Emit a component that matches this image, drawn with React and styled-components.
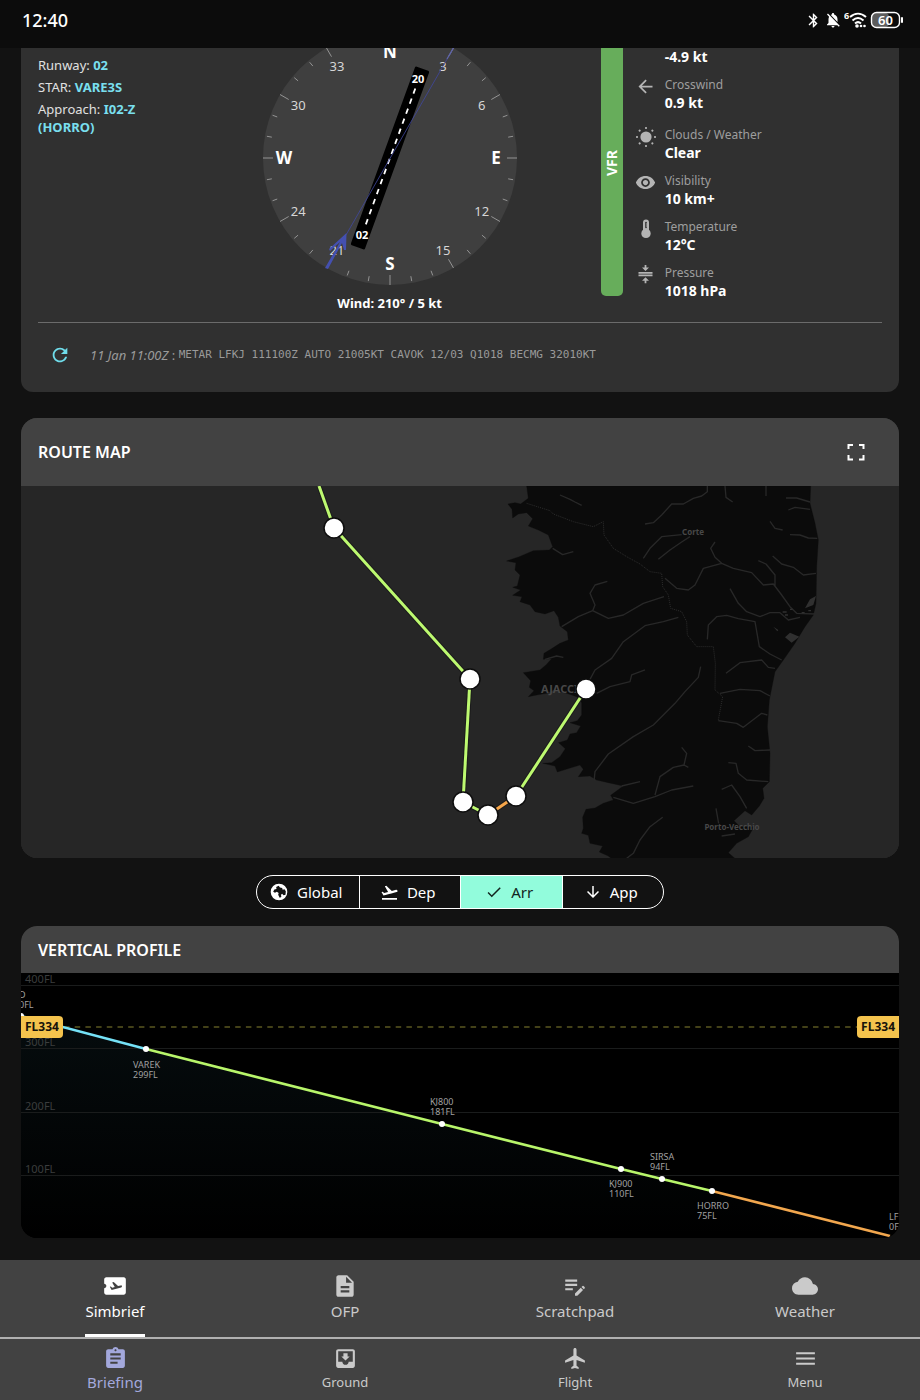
import styled, { createGlobalStyle } from "styled-components";
import {
  MdAirplaneTicket,
  MdArrowBack,
  MdArrowDownward,
  MdAssignment,
  MdBluetooth,
  MdCheck,
  MdCloud,
  MdCompress,
  MdDescription,
  MdEditNote,
  MdFlight,
  MdFlightTakeoff,
  MdMenu,
  MdMoveToInbox,
  MdNotificationsOff,
  MdRefresh,
  MdVisibility,
} from "react-icons/md";

const GlobalStyle = createGlobalStyle`
  * {
    box-sizing: border-box;
  }
  body {
    margin: 0;
    background: #121212;
    color: #fff;
    font-family: "Noto Sans", "Open Sans", sans-serif;
    font-size: 13px;
    line-height: 18px;
  }
  svg {
    display: block;
  }
`;

const Screen = styled.div`
  display: flex;
  flex-direction: column;
  min-height: 100vh;
`;

/* ---------- status bar ---------- */

const StatusBar = styled.header`
  display: flex;
  align-items: center;
  justify-content: space-between;
  height: 48px;
  padding: 0 16px 8px 22px;
  background: #0c0c0c;
`;
const Clock = styled.time`
  font-size: 18px;
  font-weight: 500;
`;
const StatusIcons = styled.div`
  display: flex;
  align-items: center;
  gap: 2px;
`;

/* ---------- cards ---------- */

const Content = styled.main`
  flex: 1;
  display: flex;
  flex-direction: column;
  padding: 0 21px 22px;
`;
const Card = styled.section`
  margin-bottom: ${(p) => (p.$scrolled ? 26 : 0)}px;
  background: ${(p) => p.$bg || "#303030"};
  border-radius: ${(p) => (p.$scrolled ? "0 0 12px 12px" : "16px")};
  overflow: hidden;
`;
const CardHeader = styled.div`
  display: flex;
  align-items: center;
  justify-content: space-between;
  height: ${(p) => (p.$tall ? 68 : 47)}px;
  padding: 0 30px 0 17px;
  background: #424242;
`;
const CardTitle = styled.h2`
  margin: 0;
  font-size: 16px;
  font-weight: 600;
`;
const IconButton = styled.button`
  display: flex;
  padding: 0;
  border: 0;
  background: none;
  color: ${(p) => p.$color || "#fff"};
  cursor: pointer;
`;

/* ---------- airport ---------- */

const Airport = styled.div`
  display: grid;
  grid-template-columns: 1fr 3fr 2fr;
  margin: 0 17px;
  padding-bottom: 22px;
  border-bottom: 1px solid #6b6b6b;
`;
const Procedures = styled.div`
  display: flex;
  flex-direction: column;
  gap: 4px;
  padding: 8px 32px 0 0;
  color: #e0e0e0;

  strong {
    color: #79dfee;
  }
`;
const CompassColumn = styled.div`
  display: flex;
  flex-direction: column;
  align-items: center;
`;
const WindText = styled.div`
  margin-top: 8px;
  height: 0;
  font-weight: 700;
`;
const Conditions = styled.div`
  display: flex;
  gap: 12px;
`;
const FlightRules = styled.div`
  display: flex;
  align-items: center;
  justify-content: center;
  width: 22px;
  margin-bottom: 4px;
  padding-bottom: 18px;
  border-radius: 0 0 5px 5px;
  background: #67ad5b;

  span {
    writing-mode: vertical-rl;
    transform: rotate(180deg);
    font-size: 14px;
    font-weight: 700;
  }
`;
const WeatherList = styled.dl`
  display: flex;
  flex-direction: column;
  gap: 10px;
  margin: 0;
`;
const WeatherRow = styled.div`
  display: grid;
  grid-template-columns: 22px auto;
  column-gap: 8px;
  margin-bottom: ${(p) => (p.$last ? 4 : 0)}px;

  svg {
    grid-row: 1 / span 2;
    justify-self: center;
    color: #b4b4b4;
  }
  dt {
    grid-column: 2;
    font-size: 12px;
    color: #9e9e9e;
  }
  dd {
    grid-column: 2;
    margin: 0;
    font-size: 14px;
    font-weight: 700;
  }
`;
const Metar = styled.div`
  display: flex;
  align-items: center;
  height: 69px;
  padding: 0 28px 6px;
  color: #9a9a9a;

  i {
    margin-left: 19px;
  }
  code {
    font-family: "DejaVu Sans Mono", monospace;
    font-size: 11px;
  }
`;

/* ---------- map ---------- */

const Drawing = styled.svg`
  width: 100%;
  height: auto;
`;

const Segmented = styled.div`
  align-self: center;
  display: grid;
  grid-template-columns: repeat(4, 1fr);
  width: 408px;
  height: 34px;
  margin: 17px 0;
  border: 1px solid #fff;
  border-radius: 17px;
  overflow: hidden;
`;
const Segment = styled.button`
  display: flex;
  align-items: center;
  justify-content: center;
  gap: 8px;
  padding: 0 4px 0 0;
  border: 0;
  border-left: ${(p) => (p.$first ? 0 : 1)}px solid #fff;
  background: ${(p) => (p.$active ? "#92fcdc" : "transparent")};
  color: ${(p) => (p.$active ? "#12241f" : "#fff")};
  font-family: inherit;
  font-size: 15px;
  cursor: pointer;
`;

/* ---------- profile ---------- */

const Profile = styled.div`
  position: relative;
  background: #000;
`;
const LevelBadge = styled.span`
  position: absolute;
  top: 43px;
  ${(p) => p.$side}: 0;
  padding: 2px 4px;
  border-radius: ${(p) => (p.$side === "left" ? "0 4px 4px 0" : "4px 0 0 4px")};
  background: #f4c34d;
  color: #17130a;
  font-size: 12px;
  font-weight: 700;
`;

/* ---------- navigation ---------- */

const Nav = styled.nav`
  display: grid;
  grid-template-columns: repeat(4, 1fr);
  background: #424242;
  border-top: ${(p) => (p.$bottom ? "2px solid #b0b0b0" : "0")};
`;
const NavLink = styled.a`
  display: flex;
  flex-direction: column;
  align-items: center;
  height: ${(p) => (p.$bottom ? 61 : 77)}px;
  padding-top: ${(p) => (p.$bottom ? 7 : 13)}px;
  color: ${(p) => p.$color || "#cacaca"};
  font-size: ${(p) => (p.$small ? 13 : 15)}px;
  text-decoration: none;
`;
const NavLabel = styled.span`
  display: flex;
  flex: 1;
  padding-top: ${(p) => (p.$bottom ? 2 : 3)}px;
  border-bottom: ${(p) => (p.$underline ? "3px solid #fff" : "0")};
  border-radius: 2px 2px 0 0;
`;

const SunIcon = () => (
  <svg width="22" height="22" viewBox="0 0 22 22" fill="currentColor">
    <circle cx="11" cy="11" r="5.6" />
    {[0, 45, 90, 135, 180, 225, 270, 315].map((a) => (
      <rect key={a} x="10" y="1" width="2" height="2" rx="0.8" transform={`rotate(${a} 11 11)`} />
    ))}
  </svg>
);

const ThermometerIcon = () => (
  <svg width="22" height="22" viewBox="0 0 22 22">
    <path d="M8 4.6a3 3 0 0 1 6 0v7.200a4.700 4.700 0 1 1-6 0z" fill="currentColor" />
    <path d="M11 4.5v5" stroke="#303030" strokeWidth="1.6" strokeLinecap="round" />
    <path d="M11 6h1M11 8h1" stroke="currentColor" strokeWidth="0.8" />
  </svg>
);

const ExpandIcon = () => (
  <svg width="26" height="26" viewBox="0 0 26 26" fill="none" stroke="currentColor" strokeWidth="2">
    <path d="M5.5 10V6H10M16 6h4.5v4M20.5 16v4.5H16M10 20.5H5.5V16" />
  </svg>
);

const GlobeIcon = () => (
  <svg width="20" height="20" viewBox="0 0 24 24">
    <circle cx="12" cy="12" r="10" fill="#fff" />
    <path
      d="M5 11.6 6.4 9 9 8.4 8.6 6l3-1.4 1.6 2 2.6.6.6 2 2.2-.4 1.6 2.4-.4 4.2-2.4.6-1.6-1.8-1.4 1.2.4 2.6-2 .8-1.8-3.6.6-2-2.2-1.4-2.2 1.2z"
      fill="#121212"
    />
  </svg>
);

const WifiIcon = () => (
  <svg width="24" height="20" viewBox="0 0 24 20" fill="none" stroke="#fff" strokeWidth="2">
    <text x="0" y="9" fontSize="9" fontWeight="700" fill="#fff" stroke="none">6</text>
    <path d="M6 7c5-4.4 11-4.4 16 0M8.5 10.4c3.4-3 7.6-3 11 0M11 13.5c1.8-1.6 4.200-1.6 6 0" />
    <circle cx="13" cy="16" r="1.8" fill="#fff" stroke="none" />
    <circle cx="17" cy="16" r="1.3" fill="#fff" stroke="none" />
    <circle cx="20.5" cy="16" r="1.3" fill="#fff" stroke="none" />
  </svg>
);

const BatteryIcon = () => (
  <svg width="34" height="18" viewBox="0 0 34 18">
    <rect x="2" y="2" width="17" height="14" rx="4" fill="#5c5c5c" />
    <rect x="1.5" y="1.5" width="28" height="15" rx="5" fill="none" stroke="#fff" strokeWidth="1.4" />
    <path d="M32 7v4" stroke="#fff" strokeWidth="2" strokeLinecap="round" />
    <text x="15.5" y="14" textAnchor="middle" fontSize="13" fontWeight="600" fill="#fff">60</text>
  </svg>
);

const polar = (deg, r) => {
  const a = (deg * Math.PI) / 180;
  return [128 + r * Math.sin(a), 128 - r * Math.cos(a)];
};

const bearings = ["N", "3", "6", "E", "12", "15", "S", "21", "24", "W", "30", "33"];

// The top of the dial is scrolled under the status bar.
const Compass = () => (
  <svg width="256" height="238" viewBox="0 18 256 238">
    <circle cx="128" cy="128" r="127" fill="#3f3f3f" />
    {Array.from({ length: 36 }, (_, i) => {
      const major = i % 3 === 0;
      const [x1, y1] = polar(i * 10, major ? 117 : 120);
      const [x2, y2] = polar(i * 10, major ? 127 : 125);
      return <line key={i} x1={x1} y1={y1} x2={x2} y2={y2} stroke="#949494" />;
    })}
    {bearings.map((label, i) => {
      const [x, y] = polar(i * 30, 106);
      const cardinal = i % 3 === 0;
      return (
        <text
          key={label}
          x={x}
          y={y + (cardinal ? 6 : 5)}
          textAnchor="middle"
          fontSize={cardinal ? 17 : 13}
          fontWeight={cardinal ? 700 : 400}
          fill={cardinal ? "#fff" : "#d6d6d6"}
        >
          {label}
        </text>
      );
    })}
    <g transform="rotate(20 128 128)">
      <rect x="120.5" y="33" width="15" height="190" rx="1.5" fill="#000" />
      <path d="M128 54V203" stroke="#fff" strokeWidth="1.8" strokeDasharray="5.5 5.2" />
    </g>
    <text x="156" y="53" textAnchor="middle" fontSize="11" fontWeight="700" fill="#fff">20</text>
    <text x="100" y="209" textAnchor="middle" fontSize="11" fontWeight="700" fill="#fff">02</text>
    <path d="M192 17 84 205" stroke="#4048a0" strokeWidth="0.8" />
    <path d="M192 17 185 29" stroke="#6166a6" strokeWidth="1.2" />
    <path d="M63 238 66 239 80 213 82 220 84 220 84.5 203 67 219 68 221 78 212z" fill="#4450b0" />
  </svg>
);

const route = [
  [298, 0],
  [313, 42],
  [449, 193],
  [442, 316],
  [467, 329],
  [495, 310],
  [565, 203],
];

// Coast, rivers and region borders share one grid, three units to a pixel.
const coast =
  "M140 18 145 55 122 72 105 68 84 72 96 88 98 114 115 102 140 98 158 116 145 138 175 150 205 165 218 200 208 210 160 212 118 230 80 243 108 248 105 270 120 285 112 318 98 322 122 330 98 346 126 350 120 365 150 375 165 395 195 402 222 392 235 412 240 438 262 455 265 480 240 490 212 508 192 520 190 538 215 536 198 555 180 570 130 578 152 602 148 622 162 632 145 650 170 645 200 640 220 630 260 640 290 650 305 668 305 705 292 722 270 728 302 738 290 758 270 762 262 780 236 788 256 806 240 830 215 848 188 850 225 858 232 876 258 868 300 855 310 868 295 890 330 888 350 900 385 908 430 918 392 946 400 960 370 970 345 984 318 988 308 1012 310 1045 305 1060 325 1066 330 1090 368 1098 358 1116 385 1128 400 1140H770L745 1118 770 1090 805 1070 822 1040 780 1040 762 1022 795 992 815 1005 838 978 852 955 848 925 868 905 870 820 862 740 868 660 878 610 885 575 910 540 945 490 975 440 1000 405 1008 370 1010 260 1015 180 1005 130 990 70 992 18z";

const rivers = [
  "M240 45 270 58 285 66 305 76",
  "M495 132 520 128 545 105 575 72 610 72 640 55 665 48 682 35V18",
  "M735 18 738 52 758 66",
  "M858 18V48",
  "M918 54 950 54 990 66M925 90 945 82 990 88",
  "M870 124 885 145 908 150M930 164 960 165 985 174 1012 175",
  "M490 235 510 205 545 170 605 164M535 238 570 210 605 186 630 170",
  "M705 186 692 205 705 232 725 250 760 265 815 278 850 315 880 312 905 345 930 380 950 400 1005 402",
  "M725 250 670 265 645 315 625 330 590 325 555 295",
  "M835 242 858 252 885 285 885 318",
  "M878 228 905 252 940 262 970 285 1008 280",
  "M750 326 775 370 800 395 840 410 870 398 900 398 925 420 960 412",
  "M218 205 248 224 280 215",
  "M382 304 345 315 330 340 345 375 338 392 385 415 430 405 490 370 552 350M338 392 295 410 245 440",
  "M595 412 550 425 495 437 430 485 395 535 345 570 330 598",
  "M195 538 230 528 250 532M350 640 390 620 450 605 455 585 495 570",
  "M682 478 685 435 710 410 740 406 775 416 825 425 838 500 870 522 905 540",
  "M738 580 780 548 845 540 865 562 885 565",
  "M720 640 780 628 840 632 870 648",
  "M662 560 655 592 615 635 585 670 520 735 460 770 385 822 345 875 342 905",
  "M715 722 770 730 790 742 845 700 862 705",
  "M805 798 825 812 870 810M745 848 768 850 775 880 800 900 865 905",
  "M605 802 620 820 612 855 580 862 540 890 525 945M625 862 612 855",
  "M400 952 460 970 525 950 575 930 640 918M425 918 480 905",
  "M725 928 755 915 780 950 800 985M708 985 716 1030M725 1068 765 1062",
  "M548 1012 510 1040 480 1080 460 1120 440 1135",
];

const borders =
  "M140 70 210 92 220 102 280 125 340 140 370 125 372 165 400 205 440 230 480 252 510 275 545 280 548 320 565 345 572 385 605 395 620 425 622 465 650 500 700 500 706 550 705 630 728 650 715 720";

const RouteMap = () => (
  <Drawing viewBox="0 0 878 372">
    <rect width="878" height="372" fill="#262626" />
    <g transform="translate(459 -6) scale(0.33333)" fill="none" strokeLinejoin="round">
      <path d={coast} fill="#0b0b0b" stroke="#0b0b0b" strokeWidth="1" />
      <path d="M915 472 930 458 958 470 935 488zM975 385 990 358 1008 348 1000 375zM880 440 895 450 892 454z" fill="#303030" />
      <path d={rivers.join("")} stroke="#282828" strokeWidth="4" />
      <path d={borders} stroke="#2c2c2c" strokeWidth="3" strokeDasharray="3 3" />
      <path d="M908 396h12M915 405h9M930 388h8M965 398h9M985 392h8" stroke="#303030" strokeWidth="4" />
    </g>
    <g fill="#484848" fontWeight="700">
      <text x="672" y="49" textAnchor="middle" fontSize="8">Corte</text>
      <text x="520" y="207" fontSize="11">AJACCIO</text>
      <text x="711" y="344" textAnchor="middle" fontSize="8">Porto-Vecchio</text>
    </g>
    {route.slice(1).map(([x, y], i) => (
      <g key={x} strokeWidth="3">
        <path d={`M${route[i]}L${x} ${y}`} stroke="#1b1b1b" strokeWidth="5" />
        <path d={`M${route[i]}L${x} ${y}`} stroke={i === 4 ? "#f5a54a" : "#bdf970"} />
      </g>
    ))}
    {route.slice(1).map(([x, y]) => (
      <circle key={x} cx={x} cy={y} r="10" fill="#fff" stroke="#0e0e0e" strokeWidth="1.5" />
    ))}
  </Drawing>
);

const levels = [
  { y: 12, label: "400FL" },
  { y: 75, label: "300FL" },
  { y: 139, label: "200FL" },
  { y: 202, label: "100FL" },
];

const waypoints = [
  { x: 0, y: 43, lx: -2, ly: 25, name: "D", level: "0FL" },
  { x: 125, y: 76, lx: 112, ly: 95, name: "VAREK", level: "299FL" },
  { x: 421, y: 151, lx: 409, ly: 132, name: "KJ800", level: "181FL" },
  { x: 600, y: 196, lx: 588, ly: 214, name: "KJ900", level: "110FL" },
  { x: 641, y: 206, lx: 629, ly: 187, name: "SIRSA", level: "94FL" },
  { x: 691, y: 218, lx: 676, ly: 236, name: "HORRO", level: "75FL" },
];

const VerticalProfile = () => (
  <Profile>
    <Drawing viewBox="0 0 878 265">
      <defs>
        <linearGradient id="descent" x1="0" y1="0" x2="0" y2="1">
          <stop offset="0" stopColor="#5cc8e8" stopOpacity="0.06" />
          <stop offset="1" stopColor="#5cc8e8" stopOpacity="0" />
        </linearGradient>
      </defs>
      <path d="M0 43 125 76 421 151 691 218 869 263V265H0z" fill="url(#descent)" />
      {levels.map(({ y, label }) => (
        <g key={label}>
          <rect y={y} width="878" height="1" fill="#1a1c1c" />
          <text x="4" y={y - 2} fontSize="11" fill="#3b3d3d">{label}</text>
        </g>
      ))}
      <path d="M43 54H840" stroke="#5a5720" strokeWidth="1.5" strokeDasharray="5.5 5.2" />
      <g fill="none" strokeWidth="2.5">
        <path d="M0 43 125 76" stroke="#75e2f7" />
        <path d="M125 76 421 151 600 196 641 206 691 218" stroke="#b8f56a" />
        <path d="M691 218 869 263" stroke="#f2a74e" />
      </g>
      {waypoints.map((w) => (
        <g key={w.name} fontSize="9" fill="#a0a0a0">
          <circle cx={w.x} cy={w.y} r="3" fill="#fff" />
          <text x={w.lx} y={w.ly}>{w.name}</text>
          <text x={w.lx} y={w.ly + 10}>{w.level}</text>
        </g>
      ))}
      <g fontSize="9" fill="#a0a0a0">
        <text x="868" y="247">LF</text>
        <text x="868" y="257">0F</text>
      </g>
    </Drawing>
    <LevelBadge $side="left">FL334</LevelBadge>
    <LevelBadge $side="right">FL334</LevelBadge>
  </Profile>
);

const conditions = [
  { icon: <MdArrowBack size={21} />, label: "Crosswind", value: "0.9 kt", last: true },
  { icon: <SunIcon />, label: "Clouds / Weather", value: "Clear" },
  { icon: <MdVisibility size={21} />, label: "Visibility", value: "10 km+" },
  { icon: <ThermometerIcon />, label: "Temperature", value: "12°C" },
  { icon: <MdCompress size={21} />, label: "Pressure", value: "1018 hPa" },
];

const phases = [
  { icon: <GlobeIcon />, label: "Global" },
  { icon: <MdFlightTakeoff size={19} />, label: "Dep" },
  { icon: <MdCheck size={18} />, label: "Arr", active: true },
  { icon: <MdArrowDownward size={18} />, label: "App" },
];

const tabs = [
  { icon: <MdAirplaneTicket size={26} />, label: "Simbrief", color: "#fff", active: true },
  { icon: <MdDescription size={26} />, label: "OFP" },
  { icon: <MdEditNote size={26} />, label: "Scratchpad" },
  { icon: <MdCloud size={26} />, label: "Weather" },
];

const sections = [
  { icon: <MdAssignment size={25} />, label: "Briefing", color: "#a3a8dc", active: true },
  { icon: <MdMoveToInbox size={25} />, label: "Ground" },
  { icon: <MdFlight size={25} />, label: "Flight" },
  { icon: <MdMenu size={25} />, label: "Menu" },
];

const App = () => {
  return (
    <>
      <GlobalStyle />
      <Screen>
        <StatusBar>
          <Clock>12:40</Clock>
          <StatusIcons>
            <MdBluetooth size={17} />
            <MdNotificationsOff size={18} />
            <WifiIcon />
            <BatteryIcon />
          </StatusIcons>
        </StatusBar>
        <Content>
          <Card $scrolled>
            <Airport>
              <Procedures>
                <div>Runway: <strong>02</strong></div>
                <div>STAR: <strong>VARE3S</strong></div>
                <div>Approach: <strong>I02-Z (HORRO)</strong></div>
              </Procedures>
              <CompassColumn>
                <Compass />
                <WindText>Wind: 210° / 5 kt</WindText>
              </CompassColumn>
              <Conditions>
                <FlightRules><span>VFR</span></FlightRules>
                <WeatherList>
                  <WeatherRow>
                    <dd>-4.9 kt</dd>
                  </WeatherRow>
                  {conditions.map((c) => (
                    <WeatherRow key={c.label} $last={c.last}>
                      {c.icon}
                      <dt>{c.label}</dt>
                      <dd>{c.value}</dd>
                    </WeatherRow>
                  ))}
                </WeatherList>
              </Conditions>
            </Airport>
            <Metar>
              <IconButton $color="#6fdcea" aria-label="Refresh METAR">
                <MdRefresh size={22} />
              </IconButton>
              <i>11 Jan 11:00Z</i>&nbsp;:&nbsp;
              <code>METAR LFKJ 111100Z AUTO 21005KT CAVOK 12/03 Q1018 BECMG 32010KT</code>
            </Metar>
          </Card>

          <Card>
            <CardHeader $tall>
              <CardTitle>ROUTE MAP</CardTitle>
              <IconButton aria-label="Full screen">
                <ExpandIcon />
              </IconButton>
            </CardHeader>
            <RouteMap />
          </Card>

          <Segmented role="group" aria-label="Flight phase">
            {phases.map((p, i) => (
              <Segment key={p.label} $first={i === 0} $active={p.active} aria-pressed={!!p.active}>
                {p.icon}
                {p.label}
              </Segment>
            ))}
          </Segmented>

          <Card $bg="#000">
            <CardHeader>
              <CardTitle>VERTICAL PROFILE</CardTitle>
            </CardHeader>
            <VerticalProfile />
          </Card>
        </Content>

        <Nav aria-label="Briefing pages">
          {tabs.map((t) => (
            <NavLink key={t.label} href="#" $color={t.color}>
              {t.icon}
              <NavLabel $underline={t.active}>{t.label}</NavLabel>
            </NavLink>
          ))}
        </Nav>
        <Nav $bottom aria-label="Sections">
          {sections.map((s) => (
            <NavLink key={s.label} href="#" $bottom $small={!s.active} $color={s.color}>
              {s.icon}
              <NavLabel $bottom>{s.label}</NavLabel>
            </NavLink>
          ))}
        </Nav>
      </Screen>
    </>
  );
};

export default App;
